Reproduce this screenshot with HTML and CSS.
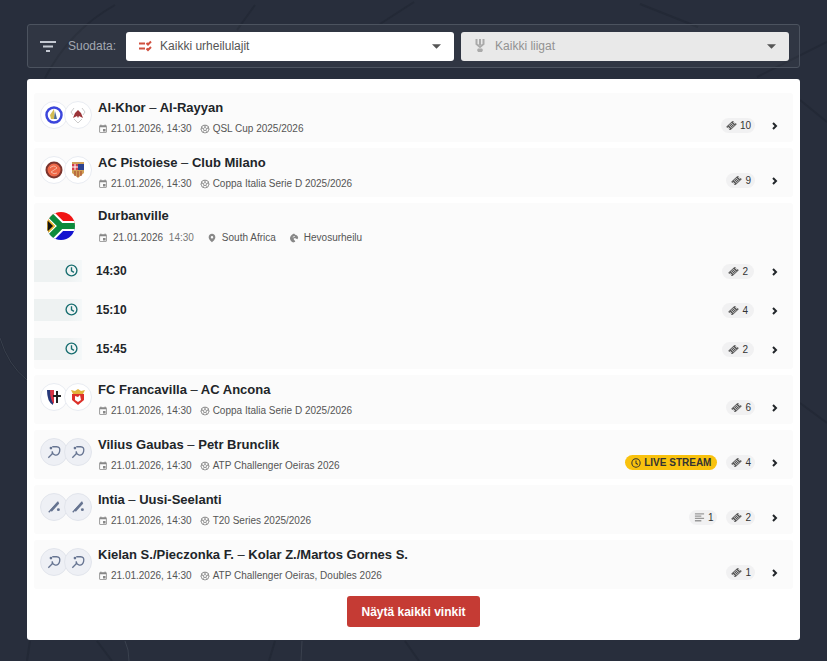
FILE: index.html
```html
<!DOCTYPE html>
<html lang="fi">
<head>
    <meta charset="utf-8" />
    <meta name="viewport" content="width=device-width, initial-scale=1" />
    <title>Vinkit</title>
    <link rel="stylesheet" href="styles.css">
</head>
<body>
    <!-- icons -->
    <svg class="sprite" aria-hidden="true">
        <symbol id="calendar" viewBox="0 0 24 24"><path d="M18 12h-6v6h6v-6zM16 1v2H8V1H6v2H5c-1.100 0-2 .9-2 2v14c0 1.100.9 2 2 2h14c1.100 0 2-.9 2-2V5c0-1.100-.9-2-2-2h-1V1h-2zm3 18H5V8h14v11z"/></symbol>
        <symbol id="ball" viewBox="0 0 24 24"><g fill="none" stroke="currentColor" stroke-width="2"><circle cx="12" cy="12" r="9.500"/><path d="M12 8l4 3-1.500 4.500h-5L8 11zM12 8V5L8 3M12 5l4-2M16 11l3-1 1-4M19 10l3 3M14.500 15.500l2 3-1 3M9.500 15.500l-2 3 1 3M8 11l-3-1-1-4M5 10l-3 3"/></g></symbol>
        <symbol id="clock" viewBox="0 0 24 24"><g fill="none" stroke="currentColor" stroke-width="2.500"><circle cx="12" cy="12" r="10"/><path d="M12 6v6.500l4.500 3"/></g></symbol>
        <symbol id="ticket" viewBox="0 0 24 24"><path d="M1 14L14 2l3 1 1 3 5 2v2L10 22l-3-1-1-3-5-2z"/><path d="M7 12l5-5 5 5-5 5zM10 14l4-4M4 15l5 5M15 4l5 5" fill="none" stroke="#f1f1f2" stroke-width="1.500"/></symbol>
        <symbol id="chevron" viewBox="0 0 12 12"><path d="M4 3l3 3-3 3" fill="none" stroke="currentColor" stroke-width="2"/></symbol>
        <symbol id="arrow" viewBox="0 0 10 5"><path d="M0 0h10L5 5z"/></symbol>
        <symbol id="lines" viewBox="0 0 12 12"><path d="M1 2h10M1 4.500h7M1 7h10M1 9.500h7" fill="none" stroke="currentColor" stroke-width="1.500"/></symbol>
        <symbol id="pin" viewBox="0 0 24 24"><path d="M12 2C7.500 2 4 5.500 4 10c0 6 8 12 8 12s8-6 8-12c0-4.500-3.500-8-8-8zm0 11a3 3 0 1 1 0-6 3 3 0 0 1 0 6z"/></symbol>
        <symbol id="horse" viewBox="0 0 24 24"><path d="M12 1l3 3c5 1 7 4 7 8l-2 3-6-3-3 2c0 3 4 4 4 7l-5 2C0 19-1 6 12 1z"/><path d="M9 10l5-2" stroke="#fbfbfb" stroke-width="2"/></symbol>
        <symbol id="tennis" viewBox="0 0 16 16"><path d="M6 2h5c3 0 4 2 3.500 5S12 12 9.500 11.500 6 10 6 7.500M6 9.500L9 11.500M6 10l-4.500 4.500M6 7v3" fill="none" stroke="currentColor" stroke-width="1.500"/><circle cx="4.500" cy="3.500" r="1.500"/></symbol>
        <symbol id="cricket" viewBox="0 0 16 16"><path d="M2 14L13 2" fill="none" stroke="currentColor" stroke-width="1.500"/><path d="M3.500 11.500L12 2l2 2-8.500 9.500z"/><circle cx="13" cy="11" r="1.700"/></symbol>
    </svg>

    <svg class="backdrop" viewBox="0 0 827 661" preserveAspectRatio="none" aria-hidden="true">
        <path d="M115 5Q70 30 45 78M255 5l-18 25M414 2l-34 22M640 4l58 23M827 42l-70 35M800 100l27 22M0 338q8 27 27 42M800 403l27 20M30 641l-3 20M97 641l15 20M275 641l-6 20M405 641l14 20"/>
        <path class="light" d="M0 338q8 27 27 42M125 641q4 8 4 20M302 641l-1 20"/>
    </svg>

    <main class="page">
        <form class="filters">
            <svg class="filter-icon" viewBox="0 0 16 11"><path d="M0 1h16M3 5.500h10M6 10h4"/></svg>
            <label class="filters-title" for="sport">Suodata:</label>
            <div class="field">
                <svg class="field-icon red" viewBox="0 0 14 12"><path d="M1 3.500h6M1 8.500h6M8.500 3l1.500 1.500 3-3M8.500 8.500L10 10l3-3"/></svg>
                <select id="sport"><option>Kaikki urheilulajit</option></select>
                <svg class="arrow"><use href="#arrow"/></svg>
            </div>
            <div class="field disabled">
                <svg class="field-icon cup" viewBox="0 0 14 14"><path d="M3.500 0v5L7 8l3.500-3V0M7 0v6" /><path d="M4 11l1-1.500h4l1 1.500-1 2H5z" fill="currentColor" stroke="none"/></svg>
                <select aria-label="Liiga" disabled><option>Kaikki liigat</option></select>
                <svg class="arrow"><use href="#arrow"/></svg>
            </div>
        </form>

        <section class="panel">
            <ul class="events">
                <li class="event">
                    <div class="logos">
                        <span class="logo"><svg viewBox="0 0 18 18"><circle cx="9" cy="9" r="7.500" fill="#fff" stroke="#3c46dc" stroke-width="2.500"/><path d="M9 3l1 10H6l-1-4z" fill="#d3bd52"/><path d="M10 5l2 8H9z" fill="#4a6c9c"/></svg></span>
                        <span class="logo"><svg viewBox="0 0 18 18"><path d="M5 2L2 6l2 3M13 2l3 4-2 3M5 13l4 4 4-4" fill="none" stroke="#ccc"/><path d="M9 4l3 3 2 5-4-2-1 2-1-2-4 2 2-5z" fill="#9b3438"/></svg></span>
                    </div>
                    <div class="info">
                        <h2><a href="#">Al-Khor <i>–</i> Al-Rayyan</a></h2>
                        <p class="meta"><svg><use href="#calendar"/></svg><time>21.01.2026, 14:30</time><svg><use href="#ball"/></svg><span>QSL Cup 2025/2026</span></p>
                    </div>
                    <div class="tips"><span class="badge"><svg><use href="#ticket"/></svg>10</span><svg class="chevron"><use href="#chevron"/></svg></div>
                </li>
                <li class="event">
                    <div class="logos">
                        <span class="logo"><svg viewBox="0 0 18 18"><circle cx="9" cy="9" r="7.500" fill="#ee6848" stroke="#7b342d" stroke-width="2"/><path d="M5 7q4-4 7 0L6 11q3 3 6 1" fill="none" stroke="#f7b39c"/></svg></span>
                        <span class="logo"><svg viewBox="0 0 18 18"><path d="M3 1h12v11l-6 5-6-5z" fill="#d0a057"/><path d="M3 3h6v6H3z" fill="#d33d4a"/><path d="M9 3h6v6H9z" fill="#2c428f"/><path d="M6 3v6M3 6h6" stroke="#fff"/><path d="M6 10v5M9 10v6M12 10v5" stroke="#a53f2c"/></svg></span>
                    </div>
                    <div class="info">
                        <h2><a href="#">AC Pistoiese <i>–</i> Club Milano</a></h2>
                        <p class="meta"><svg><use href="#calendar"/></svg><time>21.01.2026, 14:30</time><svg><use href="#ball"/></svg><span>Coppa Italia Serie D 2025/2026</span></p>
                    </div>
                    <div class="tips"><span class="badge"><svg><use href="#ticket"/></svg>9</span><svg class="chevron"><use href="#chevron"/></svg></div>
                </li>

                <!-- horse racing, one line per start -->
                <li class="meeting">
                    <div class="meeting-head">
                        <svg class="flag" viewBox="0 0 28 28">
                            <clipPath id="round"><circle cx="14" cy="14" r="14"/></clipPath>
                            <g clip-path="url(#round)">
                                <path d="M0 0h28v14H0z" fill="#f01414"/><path d="M0 14h28v14H0z" fill="#1414cf"/>
                                <path d="M-2-2l16 16L-2 30M14 14h16" fill="none" stroke="#fff" stroke-width="10"/>
                                <path d="M-6 0L8 14-6 28z" fill="#e8b52c"/>
                                <path d="M-2-2l16 16L-2 30M14 14h16" fill="none" stroke="#0d8a3c" stroke-width="6"/>
                                <path d="M0 7l7 7-7 7z" fill="#111" stroke="#e8b52c" stroke-width="1.500"/>
                            </g>
                        </svg>
                        <div class="info">
                            <h2>Durbanville</h2>
                            <p class="meta wide"><svg><use href="#calendar"/></svg><time>21.01.2026 <small>14:30</small></time><svg><use href="#pin"/></svg><span>South Africa</span><svg><use href="#horse"/></svg><span>Hevosurheilu</span></p>
                        </div>
                    </div>
                    <ul class="starts">
                        <li><span class="start-icon"><svg><use href="#clock"/></svg></span><a href="#">14:30</a><div class="tips"><span class="badge big"><svg><use href="#ticket"/></svg>2</span><svg class="chevron"><use href="#chevron"/></svg></div></li>
                        <li><span class="start-icon"><svg><use href="#clock"/></svg></span><a href="#">15:10</a><div class="tips"><span class="badge big"><svg><use href="#ticket"/></svg>4</span><svg class="chevron"><use href="#chevron"/></svg></div></li>
                        <li><span class="start-icon"><svg><use href="#clock"/></svg></span><a href="#">15:45</a><div class="tips"><span class="badge big"><svg><use href="#ticket"/></svg>2</span><svg class="chevron"><use href="#chevron"/></svg></div></li>
                    </ul>
                </li>

                <li class="event">
                    <div class="logos">
                        <span class="logo"><svg viewBox="0 0 18 18"><path d="M2 2h6v15q-6-3-6-15z" fill="#263879"/><path d="M5 2h4v14q-4-4-4-14z" fill="#d93543"/><path d="M12 3v12M8 8h8" stroke="#222" stroke-width="2"/></svg></span>
                        <span class="logo"><svg viewBox="0 0 18 18"><path d="M3 6h12v6l-6 5-6-5z" fill="#dc3029"/><path d="M2 2l4 1 3-2 3 2 4-1-2 4H4z" fill="#e3b33b"/><path d="M6 8l3 1 2-2 1 5-3 2-3-2z" fill="#fff"/></svg></span>
                    </div>
                    <div class="info">
                        <h2><a href="#">FC Francavilla <i>–</i> AC Ancona</a></h2>
                        <p class="meta"><svg><use href="#calendar"/></svg><time>21.01.2026, 14:30</time><svg><use href="#ball"/></svg><span>Coppa Italia Serie D 2025/2026</span></p>
                    </div>
                    <div class="tips"><span class="badge"><svg><use href="#ticket"/></svg>6</span><svg class="chevron"><use href="#chevron"/></svg></div>
                </li>
                <li class="event">
                    <div class="logos">
                        <span class="logo empty"><svg><use href="#tennis"/></svg></span>
                        <span class="logo empty"><svg><use href="#tennis"/></svg></span>
                    </div>
                    <div class="info">
                        <h2><a href="#">Vilius Gaubas <i>–</i> Petr Brunclik</a></h2>
                        <p class="meta"><svg><use href="#calendar"/></svg><time>21.01.2026, 14:30</time><svg><use href="#ball"/></svg><span>ATP Challenger Oeiras 2026</span></p>
                    </div>
                    <div class="tips"><span class="badge live"><svg><use href="#clock"/></svg>LIVE STREAM</span><span class="badge"><svg><use href="#ticket"/></svg>4</span><svg class="chevron"><use href="#chevron"/></svg></div>
                </li>
                <li class="event">
                    <div class="logos">
                        <span class="logo empty"><svg><use href="#cricket"/></svg></span>
                        <span class="logo empty"><svg><use href="#cricket"/></svg></span>
                    </div>
                    <div class="info">
                        <h2><a href="#">Intia <i>–</i> Uusi-Seelanti</a></h2>
                        <p class="meta"><svg><use href="#calendar"/></svg><time>21.01.2026, 14:30</time><svg><use href="#ball"/></svg><span>T20 Series 2025/2026</span></p>
                    </div>
                    <div class="tips"><span class="badge text"><svg><use href="#lines"/></svg>1</span><span class="badge"><svg><use href="#ticket"/></svg>2</span><svg class="chevron"><use href="#chevron"/></svg></div>
                </li>
                <li class="event">
                    <div class="logos">
                        <span class="logo empty"><svg><use href="#tennis"/></svg></span>
                        <span class="logo empty"><svg><use href="#tennis"/></svg></span>
                    </div>
                    <div class="info">
                        <h2><a href="#">Kielan S./Pieczonka F. <i>–</i> Kolar Z./Martos Gornes S.</a></h2>
                        <p class="meta"><svg><use href="#calendar"/></svg><time>21.01.2026, 14:30</time><svg><use href="#ball"/></svg><span>ATP Challenger Oeiras, Doubles 2026</span></p>
                    </div>
                    <div class="tips"><span class="badge"><svg><use href="#ticket"/></svg>1</span><svg class="chevron"><use href="#chevron"/></svg></div>
                </li>
            </ul>
            <button type="button" class="show-all">Näytä kaikki vinkit</button>
        </section>
    </main>
</body>
</html>
```

FILE: styles.css
```css
*{
    padding:0;
    margin:0;
    box-sizing:border-box;
}
body{
    background-color:#282e3c;
    color:#212529;
    font:12px "Liberation Sans", Arial, sans-serif;
}
svg{
    fill:currentColor;
    flex:none;
}
ul{
    list-style:none;
}
a{
    color:inherit;
    text-decoration:none;
}
.sprite{
    position:absolute;
    width:0;
    height:0;
}
.backdrop{
    position:absolute;
    top:0;
    left:0;
    width:100%;
    height:100%;
    z-index:-1;
    fill:none;
    stroke:#232936;
    stroke-width:2;
}
.backdrop .light{
    stroke:#3a414e;
    stroke-width:1;
}
.page{
    padding:24px 27px 20px;
}

/* filters */
.filters{
    display:flex;
    align-items:center;
    gap:7px;
    height:44px;
    margin-bottom:11px;
    padding:0 10px 0 12px;
    border:1px solid #4c535f;
    border-radius:3px;
    background-color:rgba(255,255,255,0.04);
}
.filter-icon{
    width:16px;
    height:11px;
    fill:none;
    stroke:#c4c9d2;
    stroke-width:2;
}
.filters-title{
    margin:0 3px 0 5px;
    color:#a3a8b1;
}
.field{
    display:flex;
    align-items:center;
    flex:1;
    height:29px;
    padding:0 13px 0 12px;
    border-radius:3px;
    background-color:#fff;
    color:#555;
}
.field select{
    flex:1;
    min-width:0;
    margin-left:8px;
    border:none;
    outline:none;
    background:none;
    appearance:none;
    color:inherit;
    font:inherit;
    opacity:1;
}
.field-icon{
    width:14px;
    height:14px;
    fill:none;
    stroke:currentColor;
}
.red{
    color:#d0503f;
    stroke-width:2;
}
.cup{
    color:#aaa;
    stroke-width:2;
}
.disabled{
    background-color:#e9e9e9;
    color:#929292;
}
.arrow{
    width:9px;
    height:5px;
    color:#555;
}

/* events */
.panel{
    padding:14px 7px 13px;
    border-radius:3px;
    background-color:#fff;
    text-align:center;
}
.events{
    display:flex;
    flex-direction:column;
    gap:6px;
    text-align:left;
}
.event,
.meeting{
    border-radius:3px;
    background-color:#fbfbfb;
}
.event{
    display:flex;
    height:49px;
    padding:0 12px 0 6px;
}
.logos{
    display:flex;
    width:58px;
    padding-top:8px;
}
.logo{
    display:flex;
    align-items:center;
    justify-content:center;
    width:28px;
    height:28px;
    border:1px solid #e9ecf2;
    border-radius:50%;
    background-color:#fff;
}
.logo + .logo{
    margin-left:-4px;
}
.logo svg{
    width:18px;
    height:18px;
}
.logo.empty{
    border-color:#e2e5ec;
    background-color:#eef0f5;
    color:#667491;
}
.logo.empty svg{
    width:14px;
    height:14px;
}
.info{
    flex:1;
    padding-top:7px;
}
h2{
    font-size:13px;
    line-height:16px;
}
h2 i{
    font-style:normal;
    font-weight:normal;
}
.meta{
    display:flex;
    align-items:center;
    margin-top:7px;
    color:#555;
    font-size:10px;
    line-height:12px;
}
.meta svg{
    width:10px;
    height:10px;
    margin-right:3px;
    color:#888;
}
.meta time{
    margin-right:8px;
}
.tips{
    display:flex;
    align-items:center;
    align-self:flex-end;
    gap:9px;
    padding-bottom:9px;
}
.badge{
    display:flex;
    align-items:center;
    gap:3px;
    height:15px;
    padding:0 4px 0 5px;
    border-radius:8px;
    background-color:#f1f1f2;
    color:#333;
    font-size:10px;
}
.badge svg{
    width:11px;
    height:11px;
    color:#555;
}
.live{
    padding:0 6px;
    background-color:#f9c20e;
    font-weight:bold;
}
.live svg{
    width:10px;
    height:10px;
    color:#333;
}
.text svg{
    color:#999;
}
.chevron{
    width:12px;
    height:12px;
    margin-left:5px;
}

/* meeting with several starts */
.meeting{
    padding-bottom:1px;
}
.meeting-head{
    display:flex;
    height:48px;
    padding-left:13px;
}
.flag{
    width:28px;
    height:28px;
    margin:9px 23px 0 0;
}
.meeting .info{
    padding-top:5px;
}
.meeting .meta{
    margin-top:8px;
}
.meta.wide svg{
    margin-right:5px;
}
.meta.wide time,
.meta.wide span{
    margin-right:13px;
}
.meta small{
    margin-left:3px;
    color:#777;
    font-size:10px;
}
.starts li{
    display:flex;
    align-items:center;
    height:39px;
    padding-right:12px;
}
.start-icon{
    display:flex;
    align-items:center;
    justify-content:flex-end;
    width:48px;
    height:22px;
    margin-right:14px;
    padding-right:4px;
    background:linear-gradient(to right, #eef2f2 70%, #f5f8f9);
}
.start-icon svg{
    width:13px;
    height:13px;
    color:#186e70;
}
.starts a{
    flex:1;
    font-weight:bold;
}
.starts .tips{
    align-self:center;
    padding:2px 0 0;
}
.badge.big{
    padding:0 6px;
    margin-right:1px;
}
.show-all{
    height:31px;
    margin-top:7px;
    padding:0 14px;
    border:none;
    border-radius:3px;
    background-color:#c53b34;
    color:#fff;
    font:bold 12px "Liberation Sans", Arial, sans-serif;
    cursor:pointer;
}
```
